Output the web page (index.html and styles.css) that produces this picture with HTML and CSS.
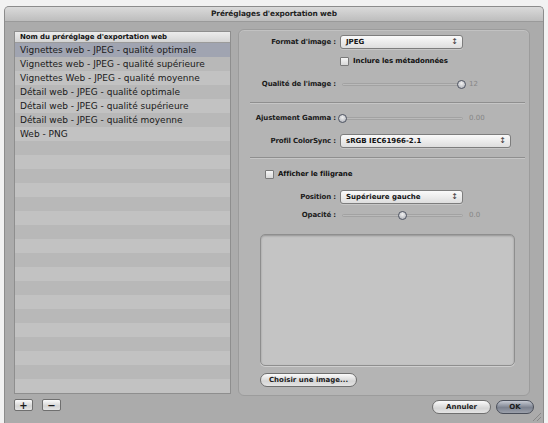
FILE: index.html
```html
<!DOCTYPE html>
<html lang="fr">
<head>
<meta charset="UTF-8">
<title>Préréglages d'exportation web</title>
<link rel="stylesheet" href="styles.css">
</head>
<body>

<!-- fenêtre de dialogue -->
<div class="window">
  <div class="titlebar">Préréglages d'exportation web</div>

  <div class="content">
    <!-- liste des préréglages -->
    <div class="list">
      <div class="list-head">Nom du préréglage d'exportation web</div>
      <div class="row sel">Vignettes web - JPEG - qualité optimale</div>
      <div class="row">Vignettes web - JPEG - qualité supérieure</div>
      <div class="row">Vignettes Web - JPEG - qualité moyenne</div>
      <div class="row">Détail web - JPEG - qualité optimale</div>
      <div class="row">Détail web - JPEG - qualité supérieure</div>
      <div class="row">Détail web - JPEG - qualité moyenne</div>
      <div class="row">Web - PNG</div>
      <div class="row"></div><div class="row"></div><div class="row"></div>
      <div class="row"></div><div class="row"></div><div class="row"></div>
      <div class="row"></div><div class="row"></div><div class="row"></div>
      <div class="row"></div><div class="row"></div><div class="row"></div>
      <div class="row"></div><div class="row"></div><div class="row"></div>
      <div class="row"></div><div class="row"></div><div class="row"></div>
    </div>

    <!-- réglages -->
    <div class="panel">
      <div class="field f-format">
        <span class="label">Format d'image :</span>
        <div class="popup w-short">JPEG<span class="arrows">&#8597;</span></div>
      </div>
      <label class="check f-meta"><span class="box"></span>Inclure les métadonnées</label>
      <div class="field f-quality">
        <span class="label">Qualité de l'image :</span>
        <div class="slider"><span class="knob" style="left:100%"></span></div>
        <span class="value">12</span>
      </div>
      <hr class="sep s1">
      <div class="field f-gamma">
        <span class="label">Ajustement Gamma :</span>
        <div class="slider"><span class="knob" style="left:0%"></span></div>
        <span class="value">0.00</span>
      </div>
      <div class="field f-profile">
        <span class="label">Profil ColorSync :</span>
        <div class="popup w-long">sRGB IEC61966-2.1<span class="arrows">&#8597;</span></div>
      </div>
      <hr class="sep s2">
      <label class="check f-mark"><span class="box"></span>Afficher le filigrane</label>
      <div class="field f-pos">
        <span class="label">Position :</span>
        <div class="popup w-short">Supérieure gauche<span class="arrows">&#8597;</span></div>
      </div>
      <div class="field f-opacity">
        <span class="label">Opacité :</span>
        <div class="slider"><span class="knob" style="left:50%"></span></div>
        <span class="value">0.0</span>
      </div>
      <div class="well"></div>
      <button class="btn choose">Choisir une image...</button>
    </div>

    <!-- barre du bas -->
    <div class="list-tools">
      <button class="btn sq">+</button>
      <button class="btn sq">&minus;</button>
    </div>
    <div class="actions">
      <button class="btn cancel">Annuler</button>
      <button class="btn ok">OK</button>
    </div>
  </div>
  <span class="grip"></span>
</div>

</body>
</html>
```

FILE: styles.css
```css
/* ───── base ───── */
*{box-sizing:border-box;margin:0;padding:0}
body{background:#f2f2f2;font-family:"DejaVu Sans",Verdana,sans-serif;color:#111;overflow:hidden}

/* ───── fenêtre ───── */
.window{position:relative;margin:6px 4px 0;height:417px;background:#ababab;
        border-radius:5px 5px 0 0;border:1px solid #8c8c8c;border-bottom:none}
.titlebar{height:15px;text-align:center;font-size:7.4px;font-weight:bold;line-height:14px;letter-spacing:-.1px;
          color:#222;background:linear-gradient(#dadada,#bdbdbd);border-radius:4px 4px 0 0;
          border-bottom:1px solid #9a9a9a}
.content{display:grid;grid-template-columns:217px 296px;grid-template-rows:365px auto;
         column-gap:7px;row-gap:5px;padding:7px 0 0 9px}

/* ───── liste ───── */
.list{margin-top:2px;height:363px;overflow:hidden;background:#bdbdbd;border:1px solid #8e8e8e}
.list-head{height:11px;font-size:7px;font-weight:bold;line-height:11px;padding-left:5px;letter-spacing:-.1px;
           background:linear-gradient(#ececec,#d4d4d4);border-bottom:1px solid #9b9b9b}
.row{height:14px;font-size:9px;line-height:14px;padding-left:5px;color:#1a1a1a;white-space:nowrap}
.row:nth-child(odd){background:#b8b8b8}
.row:nth-child(even){background:#c2c2c2}
.row.sel{background:#a0a4b1}

/* ───── panneau de réglages ───── */
.panel{width:292px;height:367px;background:#b4b4b4;border:1px solid #9c9c9c;border-radius:6px;
       box-shadow:inset 0 1px 0 #c2c2c2;padding:0 4px 0 11px;display:flex;flex-direction:column}
.field{display:flex;align-items:center;height:14px}
.label{width:86px;flex:none;text-align:right;font-size:7px;font-weight:bold;margin-right:4px;
       letter-spacing:-.15px;white-space:nowrap;color:#1b1b1b}
.f-format{margin-top:5px}
.f-quality{margin-top:11px}
.f-gamma{margin-top:7px}
.f-profile{margin-top:9px}
.f-pos{margin-top:11px}
.f-opacity{margin-top:4px}

/* menus déroulants */
.popup{position:relative;height:14px;font-size:7px;font-weight:bold;line-height:12px;padding-left:5px;
       border:1px solid #7d7d7d;border-radius:3px;background:linear-gradient(#fafafa,#dedede);
       box-shadow:0 1px 0 rgba(255,255,255,.25)}
.w-short{width:123px}
.w-long{width:171px}
.arrows{position:absolute;right:4px;top:0;font-size:8px;font-weight:normal;color:#333}

/* cases à cocher */
.check{display:flex;align-items:center;font-size:7px;font-weight:bold;height:10px;letter-spacing:-.1px}
.box{width:9px;height:9px;border:1px solid #7a7a7a;border-radius:1px;margin-right:4px;
     background:linear-gradient(#f6f6f6,#d8d8d8)}
.f-meta{margin:7px 0 0 90px}
.f-mark{margin:10px 0 0 15px}

/* curseurs */
.slider{position:relative;width:121px;height:3px;border-radius:2px;margin-left:2px;
        background:linear-gradient(#9a9a9a,#dadada);border:1px solid #a2a2a2}
.knob{position:absolute;top:-4px;width:9px;height:9px;margin-left:-5px;border-radius:50%;
      border:1.5px solid #4e5462;background:radial-gradient(circle at 50% 35%,#f0f0f0,#a9acb4)}
.value{font-size:7px;color:#868686;margin-left:6px}

/* séparateurs */
.sep{border:none;height:2px;border-top:1px solid #8f8f8f;border-bottom:1px solid #c6c6c6}
.s1{margin-top:11px}
.s2{margin-top:9px}

/* zone d'image */
.well{margin:12px 0 0 10px;width:255px;height:132px;background:#c4c4c4;border:1px solid #8e8e8e;
      border-radius:5px;box-shadow:inset 0 1px 2px rgba(0,0,0,.25),0 1px 0 #cfcfcf}

/* ───── boutons ───── */
.btn{font-family:inherit;font-size:7px;font-weight:bold;color:#1b1b1b;cursor:pointer;white-space:nowrap;
     border:1px solid #6f6f6f;background:linear-gradient(#fbfbfb,#d5d5d5 60%,#e4e4e4);
     border-radius:8px;height:14px;line-height:12px;padding:0 4px}
.choose{margin:7px 0 0 10px;width:97px;align-self:flex-start}
.list-tools{display:flex;gap:9px;padding-left:0}
.sq{width:19px;height:12px;border-radius:2px;padding:0;font-size:10px;line-height:9px}
.actions{display:flex;justify-content:flex-end;gap:5px;padding-top:1px}
.cancel{width:59px}
.ok{width:38px;border-color:#4a4f5a;background:linear-gradient(#c6cad3,#7c828f 55%,#9ba0ab)}

/* poignée de redimensionnement */
.grip{position:absolute;right:2px;bottom:2px;width:8px;height:8px;
      background:linear-gradient(135deg,transparent 45%,#888 46%,#888 52%,transparent 53%,transparent 70%,#888 71%,#888 77%,transparent 78%)}
```
